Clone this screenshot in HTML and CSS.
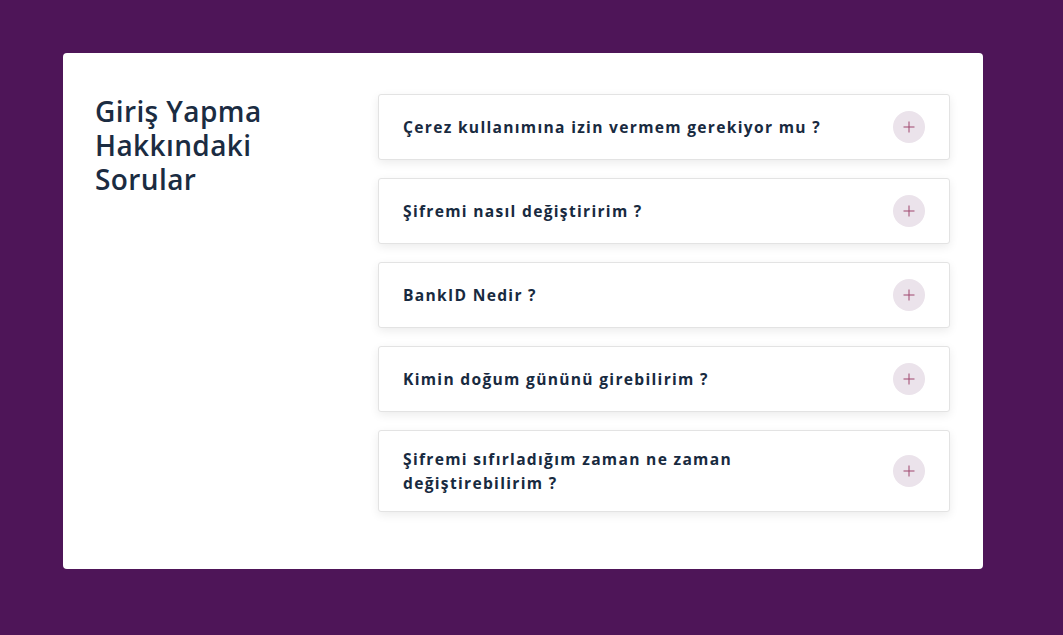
FILE: index.html
```html
<!DOCTYPE html>
<html lang="tr">
<head>
<meta charset="utf-8">
<title>SSS</title>
<link rel="stylesheet" href="styles.css">
</head>
<body>
<main class="card">
  <h2 class="title">Giriş Yapma Hakkındaki Sorular</h2>
  <div class="faq">
    <div class="item"><span class="q">Çerez kullanımına izin vermem gerekiyor mu ?</span><span class="plus"></span></div>
    <div class="item"><span class="q">Şifremi nasıl değiştiririm ?</span><span class="plus"></span></div>
    <div class="item"><span class="q">BankID Nedir ?</span><span class="plus"></span></div>
    <div class="item"><span class="q">Kimin doğum gününü girebilirim ?</span><span class="plus"></span></div>
    <div class="item"><span class="q">Şifremi sıfırladığım zaman ne zaman değiştirebilirim ?</span><span class="plus"></span></div>
  </div>
</main>
</body>
</html>
```

FILE: styles.css
```css
html, body {
  margin: 0;
  padding: 0;
}
body {
  background: #4e1558;
  font-family: "Open Sans", "Noto Sans", sans-serif;
  padding: 53px 80px 66px 63px;
  min-height: 635px;
  box-sizing: border-box;
}
.card {
  width: 920px;
  height: 516px;
  box-sizing: border-box;
  background: #fff;
  border-radius: 4px;
  padding: 41px 33px 0 32px;
  display: grid;
  grid-template-columns: 250px 1fr;
  column-gap: 33px;
  align-items: start;
}
.title {
  margin: 0;
  font-size: 28px;
  line-height: 34px;
  font-weight: 600;
  color: #1b2c42;
  letter-spacing: 0.4px;
}
.faq {
  display: flex;
  flex-direction: column;
  gap: 18px;
}
.item {
  display: flex;
  align-items: center;
  justify-content: space-between;
  gap: 24px;
  border: 1px solid #e3e3e3;
  border-radius: 3px;
  padding: 16px 24px;
  box-shadow: 0 3px 10px rgba(0, 0, 0, 0.08);
  background: #fff;
}
.q {
  font-size: 15.6px;
  line-height: 24px;
  font-weight: 700;
  color: #182a40;
  letter-spacing: 1.3px;
  max-width: 360px;
}
.item:first-child .q { max-width: none; }
.plus {
  flex: none;
  width: 32px;
  height: 32px;
  border-radius: 50%;
  background: #ebe3eb;
  position: relative;
}
.plus::before, .plus::after {
  content: "";
  position: absolute;
  left: 50%;
  top: 50%;
  background: #a0476f;
  transform: translate(-50%, -50%);
}
.plus::before { width: 11px; height: 1px; }
.plus::after { width: 1px; height: 11px; }
```
